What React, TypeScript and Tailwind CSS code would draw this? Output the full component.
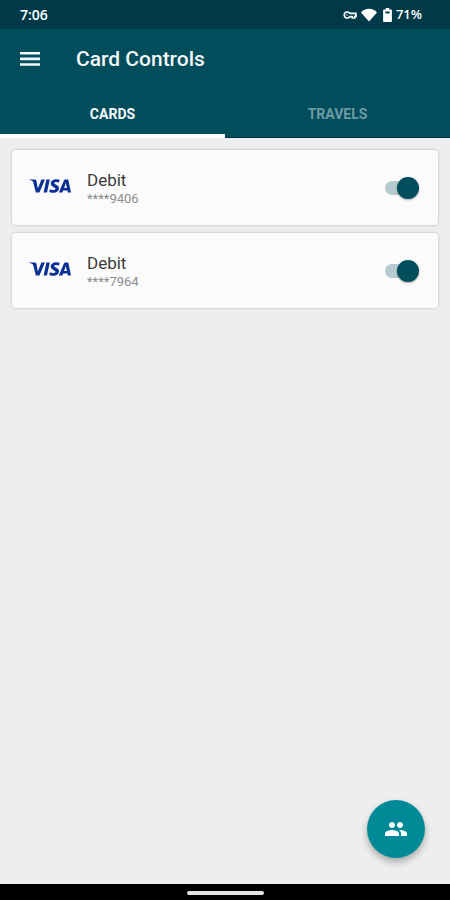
import { useState } from "react";
import { MdPeople } from "react-icons/md";
import { SiVisa } from "react-icons/si";

type Card = { id: string; name: string; masked: string };

const cards: Card[] = [
  { id: "9406", name: "Debit", masked: "****9406" },
  { id: "7964", name: "Debit", masked: "****7964" },
];

const tabs = [
  { id: "cards", label: "CARDS" },
  { id: "travels", label: "TRAVELS" },
];

function VpnIcon() {
  return (
    <svg viewBox="0 0 14 8" className="h-2 w-[14px]" fill="none" stroke="currentColor" strokeWidth="1.7" aria-hidden="true">
      <path d="M6.8 2.4A3 3 0 1 0 6.8 5.6H9.2V7H11.8V5.4H13V2.4Z" strokeLinejoin="round" />
      <circle cx="4" cy="4" r="0.7" fill="currentColor" stroke="none" />
    </svg>
  );
}

function WifiIcon() {
  return (
    <svg viewBox="0 0 16 14" className="h-[14px] w-4" fill="currentColor" aria-hidden="true">
      <path d="M8 13.6 0 4.4C2 2.1 5 0.8 8 0.8S14 2.1 16 4.4Z" />
    </svg>
  );
}

function BatteryIcon() {
  return (
    <svg viewBox="0 0 9 14" className="h-[14px] w-[9px]" aria-hidden="true">
      <path
        fill="currentColor"
        fillRule="evenodd"
        d="M2.8 0H6.2V1.5H8A0.9 0.9 0 0 1 8.9 2.4V13.1A0.9 0.9 0 0 1 8 14H1A0.9 0.9 0 0 1 0.1 13.1V2.4A0.9 0.9 0 0 1 1 1.5H2.8ZM2.4 3.4V5.6H6.6V3.4Z"
      />
    </svg>
  );
}

function MenuIcon() {
  return (
    <svg viewBox="0 0 20 14" className="h-[14px] w-5" fill="currentColor" aria-hidden="true">
      <path d="M0 0H20V2.6H0ZM0 5.6H20V8.2H0ZM0 11.2H20V13.8H0Z" />
    </svg>
  );
}

function StatusBar() {
  return (
    <div className="flex h-[29px] items-center justify-between bg-[#003a48] pr-7 pl-5 font-['Open_Sans',sans-serif] font-semibold text-white">
      <span className="text-sm">7:06</span>
      <div className="flex items-center">
        <VpnIcon />
        <span className="mr-[6px] ml-1">
          <WifiIcon />
        </span>
        <BatteryIcon />
        <span className="ml-1 text-[13px]">71%</span>
      </div>
    </div>
  );
}

function CardRow({ card }: { card: Card }) {
  const [on, setOn] = useState(true);
  const inputId = `card-${card.id}`;
  return (
    <li className="flex h-[75px] items-center rounded-sm bg-[#fbfbfb] pr-[21px] pl-[17px] shadow-[0_0_2px_1px_rgba(0,0,0,0.12)]">
      <SiVisa className="mb-1 size-[42px] text-[#0b2f94]" title="Visa" />
      <label htmlFor={inputId} className="ml-4 flex-1 pt-0.5">
        <span className="block text-[17px] leading-5 text-[#3c3c3c]">{card.name}</span>
        <span className="block text-[13px] leading-[18px] text-[#8c8c8c]">{card.masked}</span>
      </label>
      <input
        id={inputId}
        type="checkbox"
        role="switch"
        checked={on}
        onChange={() => setOn(!on)}
        className="relative h-[14px] w-8 appearance-none rounded-full bg-[#b5cbcf] before:absolute before:-top-1 before:left-0 before:size-[22px] before:rounded-full before:bg-[#f5f5f5] before:shadow-[0_1px_2px_rgba(0,0,0,0.35)] checked:before:left-3 checked:before:bg-[#004d5c]"
      />
    </li>
  );
}

export default function App() {
  const [active, setActive] = useState("cards");
  return (
    <div className="flex min-h-screen flex-col bg-[#eeeeee] font-[Roboto,sans-serif]">
      <StatusBar />
      <header className="bg-[#004d5c] text-[#f4f6f8]">
        <div className="flex h-[60px] items-center pl-5">
          <button type="button" aria-label="Menu">
            <MenuIcon />
          </button>
          <h1 className="ml-9 pt-0.5 text-[21px] font-medium">Card Controls</h1>
        </div>
        <div role="tablist" className="grid grid-cols-2">
          {tabs.map((tab) => (
            <button
              key={tab.id}
              type="button"
              role="tab"
              aria-selected={active === tab.id}
              onClick={() => setActive(tab.id)}
              className={
                active === tab.id
                  ? "h-[49px] border-b-4 border-white pt-1 text-sm font-bold"
                  : "h-[49px] border-b border-[#002f45] pt-px text-sm font-bold text-[#6f9aa4]"
              }
            >
              {tab.label}
            </button>
          ))}
        </div>
      </header>
      <main className="flex flex-1 flex-col justify-between">
        <ul className="flex flex-col gap-2 px-3 pt-3">
          {cards.map((card) => (
            <CardRow key={card.id} card={card} />
          ))}
        </ul>
        <button
          type="button"
          aria-label="Shared users"
          className="mr-[25px] mb-[26px] flex size-[58px] items-center justify-center self-end rounded-full bg-[#008a97] text-white shadow-[0_4px_7px_rgba(0,0,0,0.3)]"
        >
          <MdPeople className="size-6" />
        </button>
      </main>
      <div className="flex h-4 items-center justify-center bg-black pt-0.5">
        <div className="h-1 w-[77px] rounded-full bg-[#e4e4e4]" />
      </div>
    </div>
  );
}
